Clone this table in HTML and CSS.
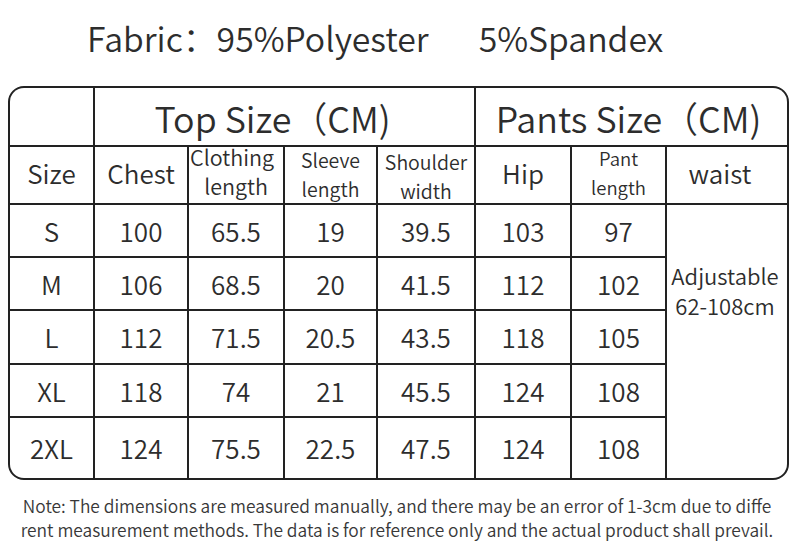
FILE: index.html
```html
<!DOCTYPE html>
<html lang="en">
<head>
<meta charset="utf-8">
<title>Size Chart</title>
<link rel="stylesheet" href="styles.css">
</head>
<body>
<div class="page">
  <h1 class="fabric">Fabric：95%Polyester<span class="spandex">5%Spandex</span></h1>
  <div class="chart">
    <div class="cell"></div>
    <div class="cell group group-top">Top Size（CM)</div>
    <div class="cell group group-pants">Pants Size（CM)</div>

    <div class="cell head">Size</div>
    <div class="cell head">Chest</div>
    <div class="cell head two clothing"><div class="stack"><span class="first-line">Clothing</span><br>length</div></div>
    <div class="cell head two sleeve"><div class="stack">Sleeve<br>length</div></div>
    <div class="cell head two shoulder"><div class="stack">Shoulder<br>width</div></div>
    <div class="cell head">Hip</div>
    <div class="cell head two pant"><div class="stack">Pant<br>length</div></div>
    <div class="cell head waist-head">waist</div>

    <div class="cell">S</div><div class="cell">100</div><div class="cell">65.5</div><div class="cell">19</div><div class="cell">39.5</div><div class="cell">103</div><div class="cell">97</div>
    <div class="cell waist"><div class="stack">Adjustable<br>62-108cm</div></div>
    <div class="cell">M</div><div class="cell">106</div><div class="cell">68.5</div><div class="cell">20</div><div class="cell">41.5</div><div class="cell">112</div><div class="cell">102</div>
    <div class="cell">L</div><div class="cell">112</div><div class="cell">71.5</div><div class="cell">20.5</div><div class="cell">43.5</div><div class="cell">118</div><div class="cell">105</div>
    <div class="cell">XL</div><div class="cell">118</div><div class="cell">74</div><div class="cell">21</div><div class="cell">45.5</div><div class="cell">124</div><div class="cell">108</div>
    <div class="cell">2XL</div><div class="cell">124</div><div class="cell">75.5</div><div class="cell">22.5</div><div class="cell">47.5</div><div class="cell">124</div><div class="cell">108</div>
  </div>
  <p class="note">Note: The dimensions are measured manually, and there may be an error of 1-3cm due to diffe<br>rent measurement methods. The data is for reference only and the actual product shall prevail.</p>
</div>
</body>
</html>
```

FILE: styles.css
```css
html, body {
  margin: 0;
  padding: 0;
  background: #ffffff;
}

body {
  font-family: "Noto Sans CJK SC", "Noto Sans", sans-serif;
  font-weight: 350;
  color: #2d2d2d;
  width: 800px;
  height: 554px;
  overflow: hidden;
}

.page {
  display: flex;
  flex-direction: column;
}

.fabric {
  margin: 0;
  padding: 18px 0 28px 87px;
  font-size: 33.8px;
  font-weight: 350;
  line-height: 40px;
  color: #2d2d2d;
  white-space: nowrap;
}

.spandex {
  margin-left: 50px;
}

.chart {
  margin-left: 8px;
  width: max-content;
  display: grid;
  grid-template-columns: 83px 92px 94px 91px 96px 94px 93px 120px;
  grid-template-rows: 57px 56px 51px 51px 52px 51px 60px;
  gap: 2px;
  background: #222222;
  border: 2px solid #222222;
  border-radius: 16px;
  overflow: hidden;
}

.cell {
  background: #ffffff;
  display: flex;
  align-items: center;
  justify-content: center;
  text-align: center;
  font-size: 26px;
  line-height: 30px;
  color: #2d2d2d;
  white-space: nowrap;
}

.stack {
  text-align: center;
}

.head {
  padding-bottom: 4px;
}

.group {
  font-size: 35.8px;
  line-height: 40px;
}

.group-top {
  grid-column: span 4;
  padding-right: 24px;
}

.group-pants {
  grid-column: span 3;
  padding-right: 6px;
}

.two {
  line-height: 29px;
}

.clothing {
  font-size: 21.5px;
  padding-bottom: 8px;
}

.clothing .first-line {
  margin-right: 8px;
}

.sleeve {
  font-size: 19.5px;
  padding-bottom: 2px;
}

.shoulder {
  font-size: 19.5px;
  padding-top: 2px;
  padding-bottom: 0;
}

.pant {
  font-size: 18.5px;
  padding-bottom: 4px;
}

.waist-head {
  padding-right: 14px;
}

.waist {
  grid-column: 8;
  grid-row: 3 / span 5;
  align-items: flex-start;
  padding-top: 55px;
  padding-right: 4px;
  font-size: 22px;
  line-height: 30px;
}

.note {
  margin: 14px 0 0 0;
  padding-right: 6px;
  font-size: 17.35px;
  line-height: 24px;
  color: #383838;
  text-align: center;
  white-space: nowrap;
}
```
